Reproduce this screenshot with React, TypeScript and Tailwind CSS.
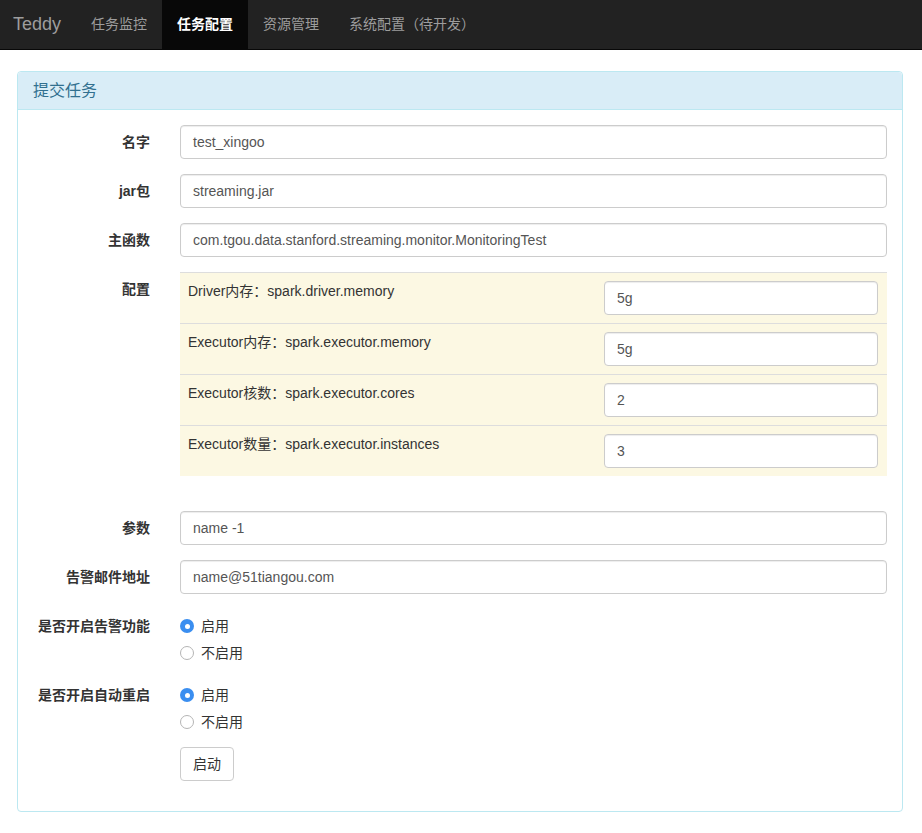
import React from 'react'

const NAV = ['任务监控', '任务配置', '资源管理', '系统配置（待开发）']

const CONFIG = [
  { label: 'Driver内存：spark.driver.memory', value: '5g' },
  { label: 'Executor内存：spark.executor.memory', value: '5g' },
  { label: 'Executor核数：spark.executor.cores', value: '2' },
  { label: 'Executor数量：spark.executor.instances', value: '3' },
]

function Field({ value }: { value: string }) {
  return (
    <div className="h-[34px] flex items-center px-3 border border-[#ccc] rounded bg-white text-[14px] text-[#555] shadow-[inset_0_1px_1px_rgba(0,0,0,0.075)]">
      {value}
    </div>
  )
}

function Row({ label, children }: { label: string; children: React.ReactNode }) {
  return (
    <div className="flex mb-[15px]">
      <div className="w-[147px] shrink-0 pr-[15px] pt-[7px] text-right font-bold text-[14px] leading-5">{label}</div>
      <div className="flex-1 px-[15px] min-w-0">{children}</div>
    </div>
  )
}

function Radio({ checked, label }: { checked: boolean; label: string }) {
  return (
    <div className="h-[27px] pt-[7px]">
      <div className="h-5 flex items-center gap-[7px]">
        {checked ? (
          <span className="w-[14px] h-[14px] rounded-full bg-[#3a8ef0] flex items-center justify-center">
            <span className="w-[5px] h-[5px] rounded-full bg-white" />
          </span>
        ) : (
          <span className="w-[14px] h-[14px] rounded-full border border-[#b5b5b5] bg-white" />
        )}
        <span className="text-[14px]">{label}</span>
      </div>
    </div>
  )
}

export default function App() {
  return (
    <div className="min-h-[833px] bg-white text-[#333] text-[14px]" style={{ fontFamily: '"Liberation Sans", "Noto Sans CJK SC", sans-serif' }}>
      {/* Navbar */}
      <div className="h-[50px] bg-[#222] border-b border-[#080808] flex items-stretch">
        <div className="flex items-center text-[18px] text-[#9d9d9d] pl-[13px] pr-[15px]">Teddy</div>
        {NAV.map((n, i) => (
          <div
            key={n}
            className={`px-[15px] flex items-center text-[14px] ${i === 1 ? 'bg-[#080808] text-white font-bold' : 'text-[#9d9d9d]'}`}
          >
            {n}
          </div>
        ))}
      </div>

      {/* Panel */}
      <div className="mt-[21px] ml-[17px] mr-[19px] border border-[#bce8f1] rounded bg-white">
        <div className="h-[38px] px-[15px] flex items-center bg-[#d9edf7] border-b border-[#bce8f1] text-[16px] text-[#31708f] rounded-t">
          提交任务
        </div>
        <div className="pt-[15px]">
          <Row label="名字"><Field value="test_xingoo" /></Row>
          <Row label="jar包"><Field value="streaming.jar" /></Row>
          <Row label="主函数"><Field value="com.tgou.data.stanford.streaming.monitor.MonitoringTest" /></Row>
          <Row label="配置">
            <div className="bg-[#fcf8e3] mb-[20px]">
              {CONFIG.map((c) => (
                <div key={c.label} className="flex border-t border-[#ddd]">
                  <div className="w-[416px] shrink-0 p-2 leading-5">{c.label}</div>
                  <div className="flex-1 pl-2 pr-[9px] py-2"><Field value={c.value} /></div>
                </div>
              ))}
            </div>
          </Row>
          <Row label="参数"><Field value="name -1" /></Row>
          <Row label="告警邮件地址"><Field value="name@51tiangou.com" /></Row>
          <Row label="是否开启告警功能">
            <Radio checked label="启用" />
            <Radio checked={false} label="不启用" />
          </Row>
          <Row label="是否开启自动重启">
            <Radio checked label="启用" />
            <Radio checked={false} label="不启用" />
          </Row>
          <div className="flex pb-[15px]">
            <div className="w-[147px] shrink-0" />
            <div className="px-[15px] mb-[15px]">
              <div className="h-[34px] px-3 flex items-center border border-[#ccc] rounded bg-white text-[14px]">启动</div>
            </div>
          </div>
        </div>
      </div>
    </div>
  )
}
